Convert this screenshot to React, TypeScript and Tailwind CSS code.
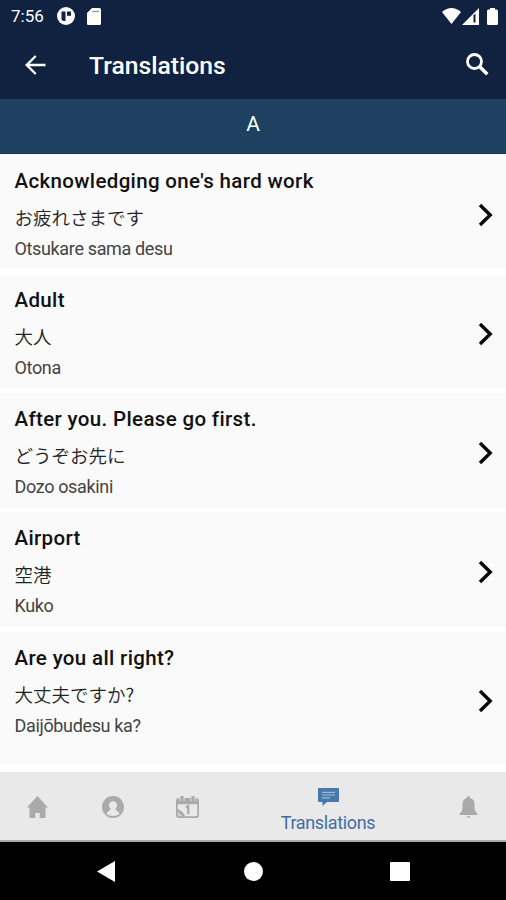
const phrases = [
  { title: "Acknowledging one's hard work", native: "お疲れさまです", reading: "Otsukare sama desu", row: "h-[114px] pt-[12px]", arrow: "mt-[37px]" },
  { title: "Adult", native: "大人", reading: "Otona", row: "mt-[7px] h-[113px] pt-[10px]", arrow: "mt-[37px]" },
  { title: "After you. Please go first.", native: "どうぞお先に", reading: "Dozo osakini", row: "mt-[5px] h-[115px] pt-[11px]", arrow: "mt-[37px]" },
  { title: "Airport", native: "空港", reading: "Kuko", row: "mt-[4px] h-[115px] pt-[11px]", arrow: "mt-[37px]" },
  { title: "Are you all right?", native: "大丈夫ですか?", reading: "Daijōbudesu ka?", row: "mt-[5px] h-[132px] pt-[11px]", arrow: "mt-[46px]" },
];

function StatusBar() {
  return (
    <div className="flex h-8 items-center text-white">
      <span className="ml-[11px] w-[46px] text-[17px] leading-8">7:56</span>
      <svg className="h-[18px] w-[18px]" viewBox="0 0 18 18">
        <circle cx="9" cy="9" r="9" fill="#fff" />
        <path d="M4.5 4.5H8.5V14H6.2L4.5 12.5ZM10 4.5H14V8.7H10Z" fill="#102240" />
      </svg>
      <svg className="ml-[12px] h-[17px] w-[14px]" viewBox="0 0 14 17">
        <path d="M5 0H12.5Q14 0 14 1.5V15.5Q14 17 12.5 17H1.5Q0 17 0 15.5V5Z" fill="#fff" />
        <path d="M5.3 3.5H12" stroke="#8d98aa" strokeWidth="1.3" />
      </svg>
      <svg className="ml-auto h-[16px] w-[19px]" viewBox="0 0 19 16">
        <path d="M0 4Q9.5-4 19 4L9.5 16Z" fill="#fff" />
      </svg>
      <svg className="ml-[1px] h-[17px] w-[17px]" viewBox="0 0 17 17">
        <path d="M0 17L17 0V17Z" fill="#fff" />
        <path d="M11.5 7.5L13.5 5.5V14.5H11.5Z" fill="#102240" />
      </svg>
      <svg className="mr-[8px] ml-[8px] h-[17px] w-[11px]" viewBox="0 0 11 17">
        <path d="M3 0H8V1.5H9.5Q11 1.5 11 3V15.5Q11 17 9.5 17H1.5Q0 17 0 15.5V3Q0 1.5 1.5 1.5H3Z" fill="#fff" />
      </svg>
    </div>
  );
}

export default function App() {
  return (
    <div className="flex h-[900px] w-[506px] flex-col overflow-hidden bg-white font-['Roboto','Noto_Sans_CJK_JP',sans-serif]">
      <header className="h-[99px] shrink-0 bg-[#102240] text-white">
        <StatusBar />
        <div className="flex h-[66px] items-center">
          <svg className="ml-[25px] h-[20px] w-[21px]" viewBox="0 0 21 20" fill="none" stroke="#fff" strokeWidth="2.4">
            <path d="M20.5 10H2M10.7 1L1.7 10L10.7 19" />
          </svg>
          <h1 className="mt-[2px] ml-[43px] text-[24.7px] leading-8 font-medium">Translations</h1>
          <svg className="mr-[17px] mb-[2px] ml-auto h-[23px] w-[23px]" viewBox="0 0 23 23" fill="none" stroke="#fff">
            <circle cx="8.5" cy="8.5" r="7" strokeWidth="2.8" />
            <path d="M13.5 13.5L21.3 21.3" strokeWidth="3.5" />
          </svg>
        </div>
      </header>
      <div className="h-[55px] shrink-0 border-b border-[#163755] bg-[#1e4161] pt-[10px] text-center text-[21px] leading-[30px] text-white">A</div>
      <main className="h-[618px] shrink-0">
        {phrases.map((p) => (
          <section key={p.title} className={`flex items-start justify-between bg-[#fafafa] pr-[13.5px] pl-[14.5px] ${p.row}`}>
            <div>
              <h2 className="text-[20.5px] leading-[30px] font-medium tracking-[0.35px] text-[#111]">{p.title}</h2>
              <p className="mt-[6px] h-[30px] font-['Noto_Sans_CJK_JP',sans-serif] text-[18.5px] leading-[30px] font-[350] text-[#222]">{p.native}</p>
              <p className="mt-[2px] h-[30px] text-[18px] leading-[30px] tracking-[-0.35px] text-[#444]">{p.reading}</p>
            </div>
            <svg className={`h-[24px] w-[15px] ${p.arrow}`} viewBox="0 0 15 24" fill="none" stroke="#050505" strokeWidth="3.4">
              <path d="M2 2L12.2 12L2 22" />
            </svg>
          </section>
        ))}
      </main>
      <nav className="flex h-[70px] shrink-0 border-b-2 border-[#aaa] bg-[#e9e9e9] text-[#aaa]">
        <div className="flex w-[75px] items-center justify-center pt-[2px]">
          <svg className="h-[22px] w-[21px]" viewBox="0 0 21 22" fill="currentColor">
            <path d="M10.5 0L21 11.5H18.5V22H12.8V17H8.2V22H2.5V11.5H0Z" />
          </svg>
        </div>
        <div className="flex w-[75px] items-center justify-center pt-[2px]">
          <svg className="h-[22px] w-[22px]" viewBox="0 0 22 22">
            <circle cx="11" cy="11" r="11" fill="#aaa" />
            <path d="M11 5.3C8.5 5.3 7 6.8 7 9.3C7 10.8 7.7 12 8.5 12.9C8.5 14.7 5.5 14.7 4.5 17.7C8 20.7 14 20.7 17.5 17.7C16.5 14.7 13.5 14.7 13.5 12.9C14.3 12 15 10.8 15 9.3C15 6.8 13.5 5.3 11 5.3Z" fill="#e9e9e9" />
          </svg>
        </div>
        <div className="flex w-[75px] items-center justify-center pt-[2px]">
          <svg className="h-[22px] w-[23px]" viewBox="0 0 23 22">
            <path d="M3 2H20Q23 2 23 5V19Q23 22 20 22H3Q0 22 0 19V5Q0 2 3 2Z" fill="#aaa" />
            <path d="M1.7 8.2H21.3V18.5Q21.3 20.3 19.5 20.3H9Q8 16 1.7 13Z" fill="#e9e9e9" />
            <path d="M1.7 15.5L6.5 20.3H3.5Q1.7 20.3 1.7 18.5Z" fill="#d2d2d2" />
            <path d="M9.8 11.3L12.2 10V18" fill="none" stroke="#aaa" strokeWidth="2.2" />
            <path d="M6 0V5M17 0V5" stroke="#e9e9e9" strokeWidth="5" />
            <path d="M6 0V5M17 0V5" stroke="#aaa" strokeWidth="3.2" />
          </svg>
        </div>
        <div className="flex w-[206px] flex-col items-center pt-[16px] text-[#426ea5]">
          <svg className="h-[18px] w-[21px]" viewBox="0 0 21 18">
            <path d="M1 0H20Q21 0 21 1V13Q21 14 20 14H9L4.5 18V14H1Q0 14 0 13V1Q0 0 1 0Z" fill="#4779ad" />
            <path d="M4 4.3H17M4 7H17M4 9.8H12" stroke="#9fb9d2" strokeWidth="1.2" />
          </svg>
          <span className="mt-[4px] text-[18px] leading-[26px] tracking-[-0.35px]">Translations</span>
        </div>
        <div className="flex w-[75px] items-center justify-center pt-[2px]">
          <svg className="h-[22px] w-[19px]" viewBox="0 0 19 22" fill="currentColor">
            <path d="M9.5 0Q11 0 11 2Q15.5 3 15.5 8V12Q15.5 15.5 18.5 18V19H.5V18Q3.5 15.5 3.5 12V8Q3.5 3 8 2Q8 0 9.5 0ZM7.5 20.2H11.5Q11 22 9.5 22Q8 22 7.5 20.2Z" />
          </svg>
        </div>
      </nav>
      <footer className="flex h-[58px] shrink-0 items-center justify-between bg-black pr-[96px] pl-[97px]">
        <svg className="h-[21px] w-[18px]" viewBox="0 0 18 21" fill="#fff"><path d="M0 10.5L18 0V21Z" /></svg>
        <div className="ml-[2px] h-[19px] w-[19px] rounded-full bg-white" />
        <div className="h-[19px] w-[20px] rounded-[1px] bg-white" />
      </footer>
    </div>
  );
}
